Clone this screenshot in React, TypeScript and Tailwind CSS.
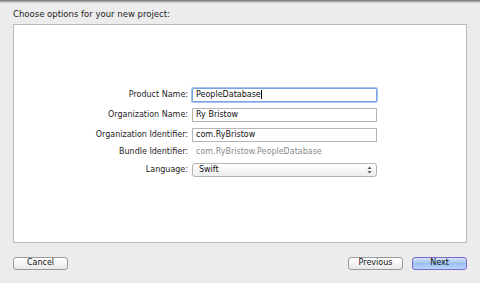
import React from 'react';

const font = { fontFamily: '"DejaVu Sans", "Lucida Grande", sans-serif' };

function Row({ label, children, h = 'h-[14px]' }: { label: string; children: React.ReactNode; h?: string }) {
  return (
    <div className={`flex items-center ${h}`}>
      <div className="w-[178px] pr-[4px] text-right text-[#1e1e1e]">{label}</div>
      <div className="flex-1">{children}</div>
    </div>
  );
}

export default function App() {
  return (
    <div className="w-[480px] h-[283px] bg-[#ececec] flex flex-col text-[8px] leading-none overflow-hidden" style={font}>
      {/* window top shadow */}
      <div className="h-[3px] bg-gradient-to-b from-[#6f6f6f] via-[#a9a9a9] to-[#e4e4e4]" />

      <div className="px-[13px] pt-[7px] pb-[5px] text-[#1c1c1c] text-[8.5px]">Choose options for your new project:</div>

      {/* options panel */}
      <div className="mx-[13px] h-[219px] bg-white border border-[#b9b9b9] flex flex-col pt-[63px]">
        <div className="flex flex-col gap-[6px] w-[363px]">
          <Row label="Product Name:">
            <div className="h-[14px] border border-[#7aa2df] shadow-[0_0_0_1px_#a9c4ee] rounded-[1px] flex items-center px-[3px] text-[#111]">
              PeopleDatabase<span className="w-px h-[9px] bg-black" />
            </div>
          </Row>
          <Row label="Organization Name:">
            <div className="h-[14px] border border-[#b5b5b5] flex items-center px-[3px] text-[#111]">Ry Bristow</div>
          </Row>
          <Row label="Organization Identifier:">
            <div className="h-[14px] border border-[#b5b5b5] flex items-center px-[3px] text-[#111]">com.RyBristow</div>
          </Row>
          <Row label="Bundle Identifier:" h="h-[10px] -mt-[1px]">
            <div className="px-[4px] text-[#8a8a8a]">com.RyBristow.PeopleDatabase</div>
          </Row>
          <Row label="Language:">
            <div className="h-[14px] border border-[#b3b3b3] rounded-[3px] bg-gradient-to-b from-white to-[#ededed] flex items-center justify-between pl-[6px] pr-[4px] text-[#111]">
              <span>Swift</span>
              <svg width="5" height="8" viewBox="0 0 5 8">
                <path d="M0.5 3 L2.5 0.5 L4.5 3 Z" fill="#555" />
                <path d="M0.5 5 L2.5 7.5 L4.5 5 Z" fill="#555" />
              </svg>
            </div>
          </Row>
        </div>
      </div>

      {/* bottom buttons */}
      <div className="flex items-center px-[13px] pt-[14px]">
        <button className="w-[55px] h-[13px] rounded-[3px] border border-[#9a9a9a] bg-gradient-to-b from-white to-[#e9e9e9] text-[#111] text-[8px] leading-none">Cancel</button>
        <div className="flex-1" />
        <button className="w-[55px] h-[13px] rounded-[3px] border border-[#9a9a9a] bg-gradient-to-b from-white to-[#e9e9e9] text-[#111] text-[8px] leading-none">Previous</button>
        <button className="ml-[9px] w-[55px] h-[13px] rounded-[3px] border border-[#7a6ad0] bg-gradient-to-b from-[#d5e4fb] via-[#9cc1f2] to-[#b9d5fa] text-[#111] text-[8px] leading-none">Next</button>
      </div>
    </div>
  );
}
